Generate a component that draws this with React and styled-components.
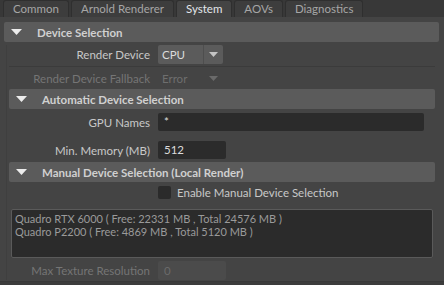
import styled, { createGlobalStyle } from "styled-components";

const Global = createGlobalStyle`
  html, body { margin: 0; padding: 0; background: #444; }
  * { box-sizing: border-box; }
`;

const Frame = styled.div`
  width: 444px;
  height: 285px;
  overflow: hidden;
  background: #3c3c3c;
  font-family: Lato, "DejaVu Sans", sans-serif;
  font-size: 11.5px;
  color: #c8c8c8;
  display: flex;
  flex-direction: column;
`;

const TabBar = styled.div`
  display: flex;
  align-items: flex-end;
  gap: 2px;
  height: 17px;
  padding-left: 3px;
  background: #383838;
`;

const Tab = styled.div`
  height: 17px;
  padding: 0 9px;
  line-height: 16px;
  border: 1px solid #2f2f2f;
  border-bottom: none;
  border-radius: 3px 3px 0 0;
  background: ${(p) => (p.$active ? "#444" : "#3d3d3d")};
  color: ${(p) => (p.$active ? "#e2e6ea" : "#a6a6a6")};
  white-space: nowrap;
`;

const Body = styled.div`
  height: 265px;
  background: #444;
  padding: 5px 5px 0 4px;
  border-bottom: 1px solid #383838;
`;

const Header = styled.div`
  display: flex;
  align-items: center;
  height: 20px;
  padding-left: 7px;
  background: #5b5b5b;
  border-radius: 2px;
  color: #d0d0d0;
  font-weight: bold;
  margin-top: ${(p) => p.$top || 0}px;
`;

const Caret = styled.svg`
  width: ${(p) => p.$w || 11}px;
  height: ${(p) => p.$h || 6}px;
  margin-right: ${(p) => p.$gap || 0}px;
  flex: none;
`;

const SectionBody = styled.div`
  margin-left: 2px;
  padding: 0 4px 0 2px;
  border-left: 1px solid #3f3f3f;
`;

const Row = styled.div`
  display: grid;
  grid-template-columns: 141px 1fr;
  column-gap: 8px;
  align-items: center;
  height: ${(p) => p.$h || 18}px;
  margin-top: ${(p) => p.$top || 0}px;
`;

const Label = styled.div`
  text-align: right;
  white-space: nowrap;
  color: ${(p) => (p.$disabled ? "#757575" : "#c8c8c8")};
`;

const Select = styled.div`
  display: flex;
  width: 65px;
  height: 19px;
  border-radius: 2px;
  background: ${(p) => (p.$disabled ? "transparent" : "#5b5b5b")};
  color: ${(p) => (p.$disabled ? "#6e6e6e" : "#dcdcdc")};
`;

const SelectValue = styled.div`
  flex: 1;
  padding-left: 4px;
  line-height: 19px;
`;

const SelectArrow = styled.div`
  width: 20px;
  display: flex;
  align-items: center;
  justify-content: center;
  border-left: 1px solid ${(p) => (p.$disabled ? "transparent" : "#4e4e4e")};
`;

const Input = styled.div`
  width: ${(p) => p.$w}px;
  height: ${(p) => p.$h || 18}px;
  padding-left: 6px;
  line-height: ${(p) => p.$h || 18}px;
  border-radius: 2px;
  background: ${(p) => (p.$disabled ? "#4b4b4b" : "#2b2b2b")};
  color: ${(p) => (p.$disabled ? "#6a6a6a" : "#dcdcdc")};
`;

const Divider = styled.div`
  height: 1px;
  background: #3b3b3b;
  margin: 2px 0;
`;

const CheckRow = styled.div`
  display: flex;
  align-items: center;
  gap: 6px;
  height: 17px;
  margin-top: 2px;
  padding-left: 149px;
`;

const Box = styled.div`
  width: 13px;
  height: 13px;
  border-radius: 2px;
  background: #2b2b2b;
`;

const DeviceList = styled.div`
  height: 49px;
  margin: 8px 2px 0 2px;
  padding: 2px 3px;
  background: #2b2b2b;
  border: 1px solid #5a5a5a;
  border-radius: 2px;
  color: #9a9a9a;
  font-size: 11px;
  line-height: 13px;
  white-space: nowrap;
`;

function Triangle({ color, w, h, gap }) {
  return (
    <Caret viewBox="0 0 11 6" preserveAspectRatio="none" $w={w} $h={h} $gap={gap}>
      <polygon points="0,0 11,0 5.5,6" fill={color} />
    </Caret>
  );
}

function SectionHeader({ title, top }) {
  return (
    <Header $top={top}>
      <Triangle color="#ececec" w={11} h={6} gap={15} />
      {title}
    </Header>
  );
}

function Dropdown({ value, disabled }) {
  return (
    <Select $disabled={disabled}>
      <SelectValue>{value}</SelectValue>
      <SelectArrow $disabled={disabled}>
        <Triangle color={disabled ? "#6a6a6a" : "#c4c4c4"} w={9} h={5} />
      </SelectArrow>
    </Select>
  );
}

const tabs = ["Common", "Arnold Renderer", "System", "AOVs", "Diagnostics"];

export default function App() {
  return (
    <>
      <Global />
      <Frame>
        <TabBar>
          {tabs.map((t) => (
            <Tab key={t} $active={t === "System"}>
              {t}
            </Tab>
          ))}
        </TabBar>
        <Body>
          <SectionHeader title="Device Selection" />
          <SectionBody>
            <Row $h={19} $top={3}>
              <Label>Render Device</Label>
              <Dropdown value="CPU" />
            </Row>
            <Divider />
            <Row>
              <Label $disabled>Render Device Fallback</Label>
              <Dropdown value="Error" disabled />
            </Row>
            <SectionHeader title="Automatic Device Selection" top={2} />
            <Row $top={4}>
              <Label>GPU Names</Label>
              <Input $w={266}>*</Input>
            </Row>
            <Row $top={10}>
              <Label>Min. Memory (MB)</Label>
              <Input $w={68}>512</Input>
            </Row>
            <SectionHeader title="Manual Device Selection (Local Render)" top={3} />
            <CheckRow>
              <Box />
              <span>Enable Manual Device Selection</span>
            </CheckRow>
            <DeviceList>
              <div>Quadro RTX 6000 ( Free: 22331 MB , Total 24576 MB )</div>
              <div>Quadro P2200 ( Free: 4869 MB , Total 5120 MB )</div>
            </DeviceList>
            <Row $h={19} $top={3}>
              <Label $disabled>Max Texture Resolution</Label>
              <Input $w={68} $h={19} $disabled>
                0
              </Input>
            </Row>
          </SectionBody>
        </Body>
      </Frame>
    </>
  );
}
